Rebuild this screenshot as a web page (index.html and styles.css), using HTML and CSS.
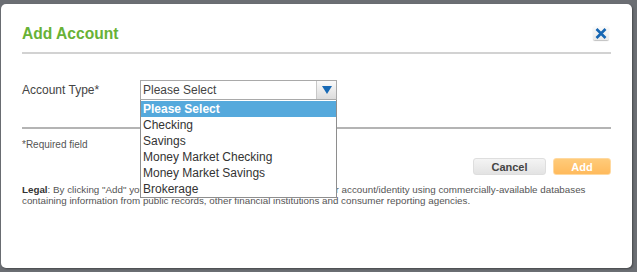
FILE: index.html
```html
<!DOCTYPE html>
<html>
<head>
<meta charset="utf-8">
<link rel="stylesheet" href="styles.css">
</head>
<body>
<div class="modal">
  <div class="head">
    <h1 class="title">Add Account</h1>
    <button class="close" aria-label="Close">
      <svg width="12" height="11" viewBox="0 0 12 11"><path d="M1.5 1 L10.5 10 M10.5 1 L1.5 10" stroke="#1666b3" stroke-width="2.6" stroke-linecap="butt"/></svg>
    </button>
  </div>
  <hr class="rule light">
  <div class="row">
    <label class="label">Account Type*</label>
    <div class="select-wrap">
      <div class="select">
        <span class="value">Please Select</span>
        <span class="arrow"><svg width="10" height="8" viewBox="0 0 10 8"><path d="M0 0 H10 L5 8 Z" fill="#1769b5"/></svg></span>
      </div>
      <ul class="options">
        <li class="opt selected">Please Select</li>
        <li class="opt">Checking</li>
        <li class="opt">Savings</li>
        <li class="opt">Money Market Checking</li>
        <li class="opt">Money Market Savings</li>
        <li class="opt">Brokerage</li>
      </ul>
    </div>
  </div>
  <hr class="rule dark">
  <div class="required">*Required field</div>
  <div class="actions">
    <button class="btn cancel">Cancel</button>
    <button class="btn add">Add</button>
  </div>
  <p class="legal"><b>Legal</b>: By clicking "Add" you acknowledge and authorize us to verify your account/identity using commercially-available databases containing information from public records, other financial institutions and consumer reporting agencies.</p>
</div>
</body>
</html>
```
FILE: styles.css
```css
html, body {
  margin: 0;
  padding: 0;
}
body {
  background: #6b6e73;
  width: 637px;
  height: 272px;
  overflow: hidden;
  font-family: "Liberation Sans", Arial, sans-serif;
}
.modal {
  box-sizing: border-box;
  margin: 4px 0 0 1px;
  width: 631px;
  height: 264px;
  background: #fff;
  border-radius: 5px;
  padding: 20px 21px 0 21px;
  box-shadow: 1px 1px 2px rgba(0,0,0,0.35);
}
.head {
  display: flex;
  justify-content: space-between;
  align-items: flex-start;
  height: 20px;
}
.title {
  margin: 0;
  font-size: 15.6px;
  line-height: 20px;
  font-weight: bold;
  color: #68b236;
}
.close {
  margin: 2px 2px 0 0;
  width: 16px;
  height: 14px;
  padding: 0;
  border: none;
  border-radius: 2px;
  background: linear-gradient(#fbfbfb, #e9e9e9);
  box-shadow: 0 1px 1px rgba(0,0,0,0.25);
  display: flex;
  align-items: center;
  justify-content: center;
}
.rule {
  border: none;
  margin: 0;
  height: 2px;
}
.rule.light {
  margin-top: 8px;
  background: #d2d2d2;
}
.rule.dark {
  margin-top: 27px;
  background: #b4b4b4;
}
.row {
  display: flex;
  margin-top: 26px;
  height: 20px;
}
.label {
  width: 118px;
  font-size: 12px;
  line-height: 20px;
  color: #444;
}
.select-wrap {
  position: relative;
  width: 197px;
}
.select {
  box-sizing: border-box;
  height: 20px;
  border: 1px solid #a9a9a9;
  display: flex;
  align-items: center;
  justify-content: space-between;
  background: #fff;
}
.value {
  font-size: 12px;
  color: #444;
  padding-left: 2px;
  line-height: 18px;
}
.arrow {
  box-sizing: border-box;
  width: 20px;
  height: 18px;
  border-left: 1px solid #c8c8c8;
  background: linear-gradient(#fafafa, #dcdcdc);
  display: flex;
  align-items: center;
  justify-content: center;
}
.options {
  position: absolute;
  top: 20px;
  left: 0;
  width: 197px;
  box-sizing: border-box;
  margin: 0;
  padding: 1px 0 0 0;
  list-style: none;
  background: #fff;
  border: 1px solid #8e8e8e;
  border-top: none;
  z-index: 5;
}
.opt {
  height: 16px;
  line-height: 16px;
  font-size: 12px;
  color: #333;
  padding-left: 2px;
  white-space: nowrap;
}
.opt.selected {
  background: #55a9dc;
  color: #fff;
  font-weight: bold;
}
.required {
  margin-top: 10px;
  font-size: 10px;
  line-height: 12px;
  color: #555;
}
.actions {
  display: flex;
  justify-content: flex-end;
  gap: 7px;
  margin-top: 7px;
}
.btn {
  box-sizing: border-box;
  height: 17px;
  border-radius: 3px;
  font-family: "Liberation Sans", Arial, sans-serif;
  font-size: 11px;
  font-weight: bold;
  padding: 0;
}
.cancel {
  width: 73px;
  border: 1px solid #dedede;
  background: linear-gradient(#f4f4f4, #e3e3e3);
  color: #444;
}
.add {
  width: 58px;
  border: 1px solid #ffd9a0;
  background: linear-gradient(#ffcb7a, #ffba5c);
  color: #fff;
}
.legal {
  margin: 9px 0 0 0;
  font-size: 9.8px;
  line-height: 11px;
  color: #555;
}
.legal b {
  color: #333;
}
```
